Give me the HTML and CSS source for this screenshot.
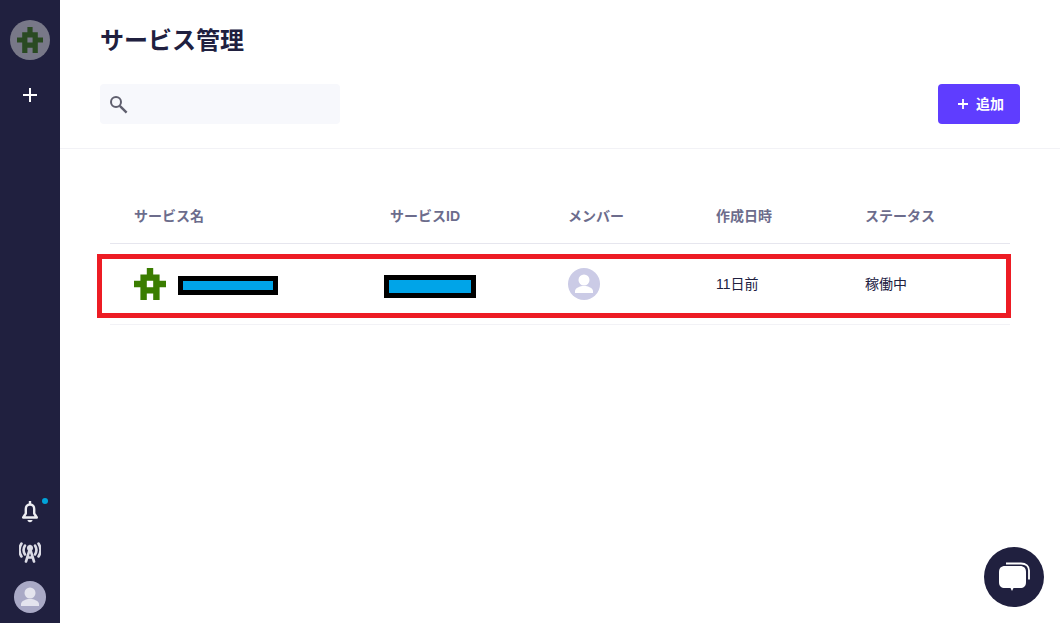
FILE: index.html
```html
<!DOCTYPE html>
<html lang="ja">
<head>
  <meta charset="UTF-8">
  <meta name="viewport" content="width=device-width, initial-scale=1.0">
  <title>サービス管理</title>
  <link rel="stylesheet" href="styles.css">
</head>
<body>

<div class="sidebar">
  <div class="sidebar-top">
    <div class="org-logo">
      <svg width="26" height="26" viewBox="0 0 5 5"><path fill="#2a4a22" fill-rule="evenodd" d="M2 0h1v1h1v1h1v1H4v2H3V4H2v1H1V3H0V2h1V1h1zM2 2v1h1V2z"/></svg>
    </div>
    <svg class="add-icon" width="16" height="16" viewBox="0 0 16 16"><path stroke="#fff" stroke-width="2" d="M8 1v14M1 8h14"/></svg>
  </div>
  <div class="sidebar-bottom">
    <div class="bell">
      <svg width="20" height="22" viewBox="0 0 20 22"><path fill="none" stroke="#ececf2" stroke-width="2.400" stroke-linejoin="round" d="M10 3.500c-2.800 0-4.200 2-4.200 4.500v4.500L3.200 16.500h13.600l-2.600-4V8c0-2.500-1.400-4.500-4.200-4.500z"/><path fill="#ececf2" d="M8.800 0h2.400v3H8.800zM7.500 19h5c0 1.300-1 2.200-2.500 2.200s-2.500-.9-2.500-2.200z"/></svg>
      <span class="bell-dot"></span>
    </div>
    <svg width="22" height="22" viewBox="0 0 22 22"><g fill="none" stroke="#dcdce6" stroke-width="2.600" stroke-linecap="round"><path d="M6 4.500c-1.800 2.800-1.800 6.200 0 9M16 4.500c1.800 2.800 1.800 6.200 0 9"/><path d="M2.500 2.500c-2.800 4.500-2.800 8.500 0 13M19.500 2.500c2.800 4.500 2.800 8.500 0 13"/><path d="M7 20.500l4-13 4 13M8.500 16.500h5"/></g><circle cx="11" cy="7" r="3" fill="#dcdce6"/></svg>
    <div class="user-avatar">
      <svg width="32" height="32" viewBox="0 0 32 32"><circle cx="16" cy="12" r="5.500" fill="#e4e4ee"/><path fill="#e4e4ee" d="M7 25v-2c0-3 5-5 9-5s9 2 9 5v2z"/></svg>
    </div>
  </div>
</div>

<div class="main">
  <div class="page-header">
    <h1>サービス管理</h1>
    <div class="toolbar">
      <div class="search-box">
        <svg width="20" height="20" viewBox="0 0 20 20"><circle cx="6" cy="8" r="5" fill="none" stroke="#5f5f6e" stroke-width="2"/><path stroke="#5f5f6e" stroke-width="2.400" d="M9.800 11.800l6.800 6.800"/></svg>
      </div>
      <button class="add-btn">
        <svg width="10" height="10" viewBox="0 0 10 10"><path stroke="#fff" stroke-width="1.800" d="M5 0v10M0 5h10"/></svg>
        追加
      </button>
    </div>
  </div>

  <div class="service-table">
    <div class="table-row table-head">
      <div class="col-name">サービス名</div>
      <div class="col-id">サービスID</div>
      <div class="col-member">メンバー</div>
      <div class="col-date">作成日時</div>
      <div class="col-status">ステータス</div>
    </div>
    <div class="table-row table-body">
      <div class="col-name">
        <svg width="32" height="32" viewBox="0 0 5 5"><path fill="#3a7d00" fill-rule="evenodd" d="M2 0h1v1h1v1h1v1H4v2H3V4H2v1H1V3H0V2h1V1h1zM2 2v1h1V2z"/></svg>
        <div class="redact redact-name"></div>
      </div>
      <div class="col-id">
        <div class="redact redact-id"></div>
      </div>
      <div class="col-member">
        <div class="member-avatar">
          <svg width="32" height="32" viewBox="0 0 32 32"><circle cx="16" cy="12" r="5.500" fill="#fff"/><path fill="#fff" d="M7 25v-2c0-3 5-5 9-5s9 2 9 5v2z"/></svg>
        </div>
      </div>
      <div class="col-date">11日前</div>
      <div class="col-status">稼働中</div>
    </div>
    <div class="highlight"></div>
  </div>
</div>

<div class="chat-btn">
  <svg width="34" height="32" viewBox="0 0 34 32"><path fill="none" stroke="#fff" stroke-width="1.800" d="M9 2.500h15c5 0 8 3 8 7v9"/><path fill="#fff" d="M8 5h15c4 0 6 2.200 6 6v10c0 4-2 6-6 6h-6.500L15 30l-1.500-3H8c-4 0-6-2-6-6V11c0-3.800 2-6 6-6z"/></svg>
</div>

</body>
</html>
```

FILE: styles.css
```css
* {
  box-sizing: border-box;
}

body {
  font-family: "Liberation Sans", "Noto Sans CJK JP", sans-serif;
  margin: 0;
  padding: 0;
  height: 623px;
  overflow: hidden;
  display: flex;
  background-color: #fff;
}

.sidebar {
  width: 60px;
  height: 623px;
  flex-shrink: 0;
  background-color: #20203f;
  display: flex;
  flex-direction: column;
  justify-content: space-between;
  align-items: center;
  padding: 20px 0 10px;
}

.sidebar-top,
.sidebar-bottom {
  display: flex;
  flex-direction: column;
  align-items: center;
}

.org-logo {
  width: 40px;
  height: 40px;
  border-radius: 50%;
  background-color: #787888;
  display: flex;
  align-items: center;
  justify-content: center;
}

.add-icon {
  margin-top: 27px;
}

.sidebar-bottom svg {
  display: block;
}

.bell {
  position: relative;
  margin-bottom: 18px;
}

.bell-dot {
  position: absolute;
  top: -3px;
  right: -8px;
  width: 6px;
  height: 6px;
  border-radius: 50%;
  background-color: #00a3d9;
}

.user-avatar {
  width: 32px;
  height: 32px;
  margin-top: 18px;
  border-radius: 50%;
  background-color: #a9a9c6;
}

.main {
  flex: 1;
  min-width: 0;
}

.page-header {
  height: 149px;
  padding: 26px 40px 0;
  border-bottom: 1px solid #f2f2f6;
}

.page-header h1 {
  margin: 0 0 26px;
  font-size: 24px;
  line-height: 30px;
  height: 32px;
  font-weight: bold;
  color: #20203f;
}

.toolbar {
  display: flex;
  justify-content: space-between;
}

.search-box {
  width: 240px;
  height: 40px;
  padding: 10px;
  background-color: #f7f8fc;
  border-radius: 4px;
}

.add-btn {
  width: 82px;
  height: 40px;
  padding: 0 0 2px 20px;
  border: none;
  border-radius: 4px;
  background-color: #5f3dff;
  color: #fff;
  font-family: inherit;
  font-size: 14px;
  font-weight: bold;
  display: flex;
  align-items: center;
  gap: 8px;
}

.add-btn svg {
  margin-top: 2px;
}

.service-table {
  position: relative;
  margin: 39px 50px 0;
}

.table-row {
  display: flex;
  align-items: center;
}

.table-head {
  height: 56px;
  padding-bottom: 2px;
  border-bottom: 1px solid #e6e6ee;
  font-size: 14px;
  font-weight: bold;
  color: #6c6c8c;
}

.table-body {
  height: 81px;
  border-bottom: 1px solid #f2f2f6;
  font-size: 14px;
  color: #20203f;
}

.col-name,
.col-id,
.col-member,
.col-date,
.col-status {
  padding-left: 24px;
  display: flex;
  align-items: center;
}

.col-name { width: 256px; gap: 12px; }
.col-id { width: 178px; }
.col-member { width: 148px; }
.col-date { width: 149px; }
.col-status { flex: 1; }

.table-body .col-date,
.table-body .col-status {
  padding-bottom: 2px;
}

.redact {
  border: 5px solid #000;
  background-color: #00a4e8;
}

.redact-name {
  width: 100px;
  height: 19px;
  margin-top: 3px;
}

.redact-id {
  width: 92px;
  height: 23px;
  margin: 5px 0 0 -6px;
}

.member-avatar {
  width: 32px;
  height: 32px;
  border-radius: 50%;
  background-color: #cbcbe6;
}

.member-avatar svg {
  display: block;
}

.highlight {
  position: absolute;
  top: 66px;
  left: -13px;
  width: 914px;
  height: 64px;
  border: 5px solid #ed1c24;
}

.chat-btn {
  position: absolute;
  left: 984px;
  top: 547px;
  width: 60px;
  height: 60px;
  border-radius: 50%;
  background-color: #20203f;
  display: flex;
  align-items: center;
  justify-content: center;
}
```
